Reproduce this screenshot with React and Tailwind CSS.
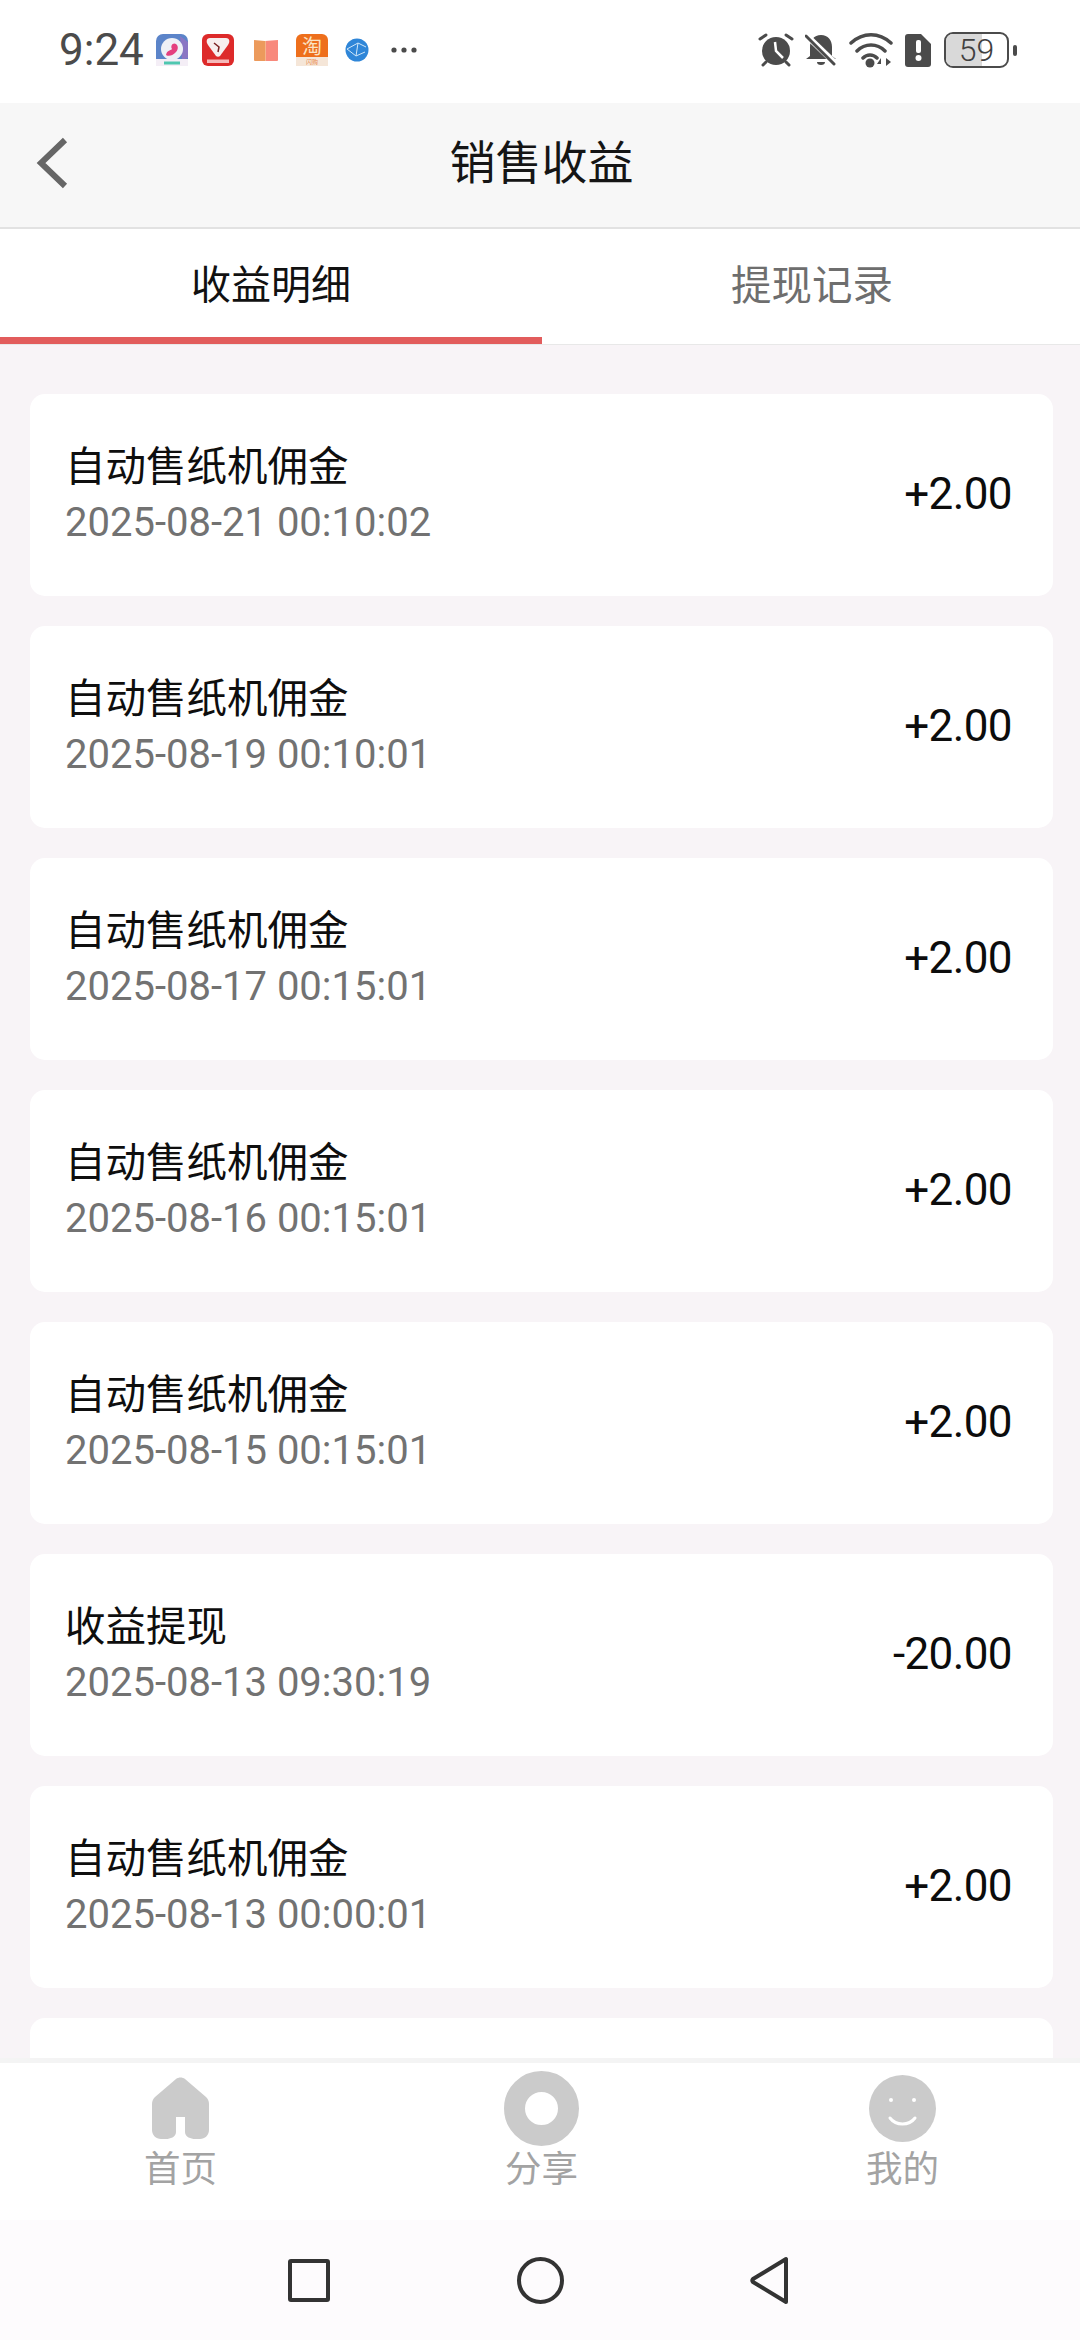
import React from "react";

const CJK = "font-['Roboto','Noto_Sans_CJK_SC',sans-serif]";

const rows = [
  ["自动售纸机佣金", "2025-08-21 00:10:02", "+2.00"],
  ["自动售纸机佣金", "2025-08-19 00:10:01", "+2.00"],
  ["自动售纸机佣金", "2025-08-17 00:15:01", "+2.00"],
  ["自动售纸机佣金", "2025-08-16 00:15:01", "+2.00"],
  ["自动售纸机佣金", "2025-08-15 00:15:01", "+2.00"],
  ["收益提现", "2025-08-13 09:30:19", "-20.00"],
  ["自动售纸机佣金", "2025-08-13 00:00:01", "+2.00"],
  ["", "", ""],
];

function AppIcons() {
  return (
    <div className="ml-[12px] flex items-center">
      <svg width="32" height="32" viewBox="0 0 32 32">
        <rect width="32" height="32" rx="7" fill="#5b84c9" />
        <path d="M24 2l8 6v16l-6 2z" fill="#8a76c4" />
        <rect x="0" y="25" width="32" height="7" fill="#f4eef6" />
        <circle cx="16" cy="15" r="11" fill="#eef0f6" />
        <path d="M10 21c1-5 4-4 6-6-2-3 1-7 4-5 3 2 2 7-1 9-2 2-6 4-9 2z" fill="#e4407f" />
        <rect x="8" y="27.500" width="16" height="3" fill="#4fc7b0" />
      </svg>
      <svg className="ml-[14px]" width="32" height="32" viewBox="0 0 32 32">
        <rect width="32" height="32" rx="6" fill="#dd2a2a" />
        <path d="M8 4h16c4 0 4 4 2 7l-8 11c-1 1-3 1-4 0L6 11C4 8 4 4 8 4z" fill="#f7eeee" />
        <path d="M12 9l5 4-1 5" stroke="#7a2222" strokeWidth="1.500" fill="none" />
        <rect x="5" y="25.500" width="22" height="3.500" fill="#f5b9b9" />
      </svg>
      <svg className="ml-[20px]" width="24" height="22" viewBox="0 0 24 22">
        <path d="M0 1l11 1v20H1a1 1 0 0 1-1-1z" fill="#ec9a5c" />
        <path d="M24 1l-13 1v20h12a1 1 0 0 0 1-1z" fill="#f8897c" />
        <path d="M11.500 2v20" stroke="#f5b48c" strokeWidth="1" />
      </svg>
      <svg className="ml-[18px] overflow-visible" width="32" height="32" viewBox="0 0 32 32">
        <rect width="32" height="32" rx="6" fill="#ee6f1c" />
        <rect y="23" width="32" height="9" fill="#f5e6d8" />
        <text x="16" y="20" textAnchor="middle" fontSize="20" fill="#fbe3c4" fontFamily="'Noto Sans CJK SC',sans-serif">淘</text>
        <text x="16" y="29.500" textAnchor="middle" fontSize="6" fill="#e98a4a" fontFamily="'Noto Sans CJK SC',sans-serif">闪购</text>
      </svg>
      <svg className="ml-[17px]" width="24" height="24" viewBox="0 0 24 24">
        <circle cx="12" cy="12" r="11.500" fill="#2f86d8" />
        <path d="M2 11l9 7 2-13 8 4M11 18l9-4M2 11l11-6" stroke="#cfe6f8" strokeWidth="1" fill="none" />
      </svg>
      <svg className="ml-[22px]" width="26" height="6" viewBox="0 0 26 6">
        <circle cx="3" cy="3" r="2.600" fill="#4b4b4b" />
        <circle cx="13" cy="3" r="2.600" fill="#4b4b4b" />
        <circle cx="23" cy="3" r="2.600" fill="#4b4b4b" />
      </svg>
    </div>
  );
}

function StatusRight() {
  return (
    <div className="flex items-center">
      <svg width="36" height="36" viewBox="0 0 36 36">
        <path d="M2 7l6-4M34 7l-6-4" stroke="#4b4b4b" strokeWidth="3" strokeLinecap="round" />
        <path d="M8 30l-3 3M28 30l3 3" stroke="#4b4b4b" strokeWidth="3" strokeLinecap="round" />
        <circle cx="18" cy="19" r="14" fill="#4b4b4b" />
        <path d="M17 10l1 9 7 7" stroke="#fff" strokeWidth="2.500" fill="none" />
      </svg>
      <svg className="ml-[11px]" width="32" height="34" viewBox="0 0 32 34">
        <path d="M16 2c7 0 11 5 11 12v9l4 3H1l4-3v-9C5 7 9 2 16 2z" fill="#4b4b4b" />
        <path d="M12 29h8a4 3 0 0 1-8 0z" fill="#4b4b4b" />
        <path d="M0 1l31 30" stroke="#fff" strokeWidth="6" />
        <path d="M1 3l28 28" stroke="#4b4b4b" strokeWidth="3" strokeLinecap="round" />
      </svg>
      <svg className="ml-[12px]" width="44" height="36" viewBox="0 0 44 36">
        <path d="M2 11c12-11 28-11 40 0M8 19c8-8 20-8 28 0M14 26c4-4 10-4 14 0" stroke="#4b4b4b" strokeWidth="3.500" fill="none" strokeLinecap="round" />
        <circle cx="21" cy="31" r="4.500" fill="#4b4b4b" />
        <path d="M32 34v-8l-4 6h4zM37 26v8l5-4z" fill="#4b4b4b" />
      </svg>
      <svg className="ml-[12px]" width="26" height="33" viewBox="0 0 26 33">
        <path d="M3 0h13l10 10v20a3 3 0 0 1-3 3H3a3 3 0 0 1-3-3V3a3 3 0 0 1 3-3z" fill="#4b4b4b" />
        <rect x="11" y="6" width="5" height="13" rx="2" fill="#fff" />
        <circle cx="13.500" cy="24" r="3" fill="#fff" />
      </svg>
      <div className="relative ml-[13px] flex h-[36px] w-[65px] items-center justify-center overflow-hidden rounded-[9px] border-[2.500px] border-[#4b4b4b] text-[32px] leading-none text-[#404040]">
        <div className="absolute inset-y-0 left-0 w-[36px] bg-[#d9d9d9]" />
        <span className="relative font-['Roboto',sans-serif] font-light">59</span>
      </div>
      <div className="ml-[4px] h-[11px] w-[4px] rounded-full bg-[#4b4b4b]" />
    </div>
  );
}

function Card({ title, date, amount }) {
  return (
    <div className="flex h-[202px] shrink-0 items-center justify-between rounded-[15px] bg-white pl-[35px] pr-[41px]">
      <div className="flex flex-col">
        <div className="h-[56px] text-[40.500px] leading-[56px] text-[#0e0e0e]">{title}</div>
        <div className="h-[56px] text-[40px] leading-[56px] text-[#727272]">{date}</div>
      </div>
      <div className="pb-[2px] text-[44px] leading-none tracking-[-0.600px] text-[#0c0c0c]">{amount}</div>
    </div>
  );
}

function NavItem({ icon, label }) {
  return (
    <div className="flex flex-1 flex-col items-center">
      <div className="flex h-[78px] items-center justify-center">{icon}</div>
      <div className="text-[36.500px] leading-[46px] text-[#a3a3a3]">{label}</div>
    </div>
  );
}

export default function App() {
  return (
    <div className={"flex h-[2340px] w-[1080px] flex-col overflow-hidden bg-[#f8f4f7] " + CJK}>
      <div className="flex h-[103px] shrink-0 items-center justify-between bg-white pb-[3px] pl-[59px] pr-[63px]">
        <div className="flex items-center">
          <span className="text-[44px] leading-none text-[#4b4b4b]">9:24</span>
          <AppIcons />
        </div>
        <StatusRight />
      </div>

      <div className="relative flex h-[126px] shrink-0 items-center justify-center border-b-2 border-[#e2e2e2] bg-[#f7f7f7] pb-[5px] pl-[3px]">
        <svg className="absolute left-[36px] top-[34px]" width="32" height="52" viewBox="0 0 32 52">
          <path d="M29 3L5 26l24 23" stroke="#666" strokeWidth="6" fill="none" />
        </svg>
        <span className="text-[46px] leading-none text-[#151515]">销售收益</span>
      </div>

      <div className="flex h-[116px] shrink-0 border-b border-[#e8e8e8] bg-white">
        <div className="flex w-[542px] items-center justify-center border-b-[7px] border-[#e25c5c] pt-[6px] text-[40px] text-[#111]">收益明细</div>
        <div className="flex flex-1 items-center justify-center pb-[7px] pl-[2px] pt-[6px] text-[40.500px] text-[#6e6e6e]">提现记录</div>
      </div>

      <div className="flex min-h-0 flex-1 flex-col gap-[30px] overflow-hidden pl-[30px] pr-[27px] pt-[49px]">
        {rows.map((r, i) => (
          <Card key={i} title={r[0]} date={r[1]} amount={r[2]} />
        ))}
      </div>

      <div className="flex h-[162px] w-[1083px] shrink-0 border-t-[5px] border-[#f4f4f4] bg-white pt-[6px]">
        <NavItem
          icon={
            <svg width="57" height="62" viewBox="0 0 57 62">
              <path d="M24 2c2.500-2 6.500-2 9 0l21 18c2 2 3 4 3 7v26c0 5-4 9-9 9h-5c-4 0-10-2-10-7V40H24v15c0 5-6 7-10 7H9c-5 0-9-4-9-9V27c0-3 1-5 3-7z" fill="#cbcbcb" />
            </svg>
          }
          label="首页"
        />
        <NavItem
          icon={
            <svg width="75" height="75" viewBox="0 0 75 75">
              <circle cx="37.500" cy="37.500" r="27" fill="none" stroke="#cbcbcb" strokeWidth="21" />
            </svg>
          }
          label="分享"
        />
        <NavItem
          icon={
            <svg width="67" height="67" viewBox="0 0 67 67">
              <circle cx="33.500" cy="33.500" r="33.500" fill="#cbcbcb" />
              <circle cx="22" cy="25" r="2" fill="#fff" />
              <circle cx="45" cy="25" r="2" fill="#fff" />
              <path d="M21 43c6 8 19 8 25 0" stroke="#fff" strokeWidth="3" fill="none" strokeLinecap="round" />
            </svg>
          }
          label="我的"
        />
      </div>

      <div className="flex h-[120px] shrink-0 items-center justify-center bg-[#fdfbfd] pr-[3px]">
        <div className="flex items-center">
          <div className="h-[43px] w-[42px] rounded-[3px] border-[4px] border-[#333]" />
          <div className="ml-[187px] h-[47px] w-[47px] rounded-full border-[4px] border-[#333]" />
          <svg className="ml-[185px]" width="40" height="49" viewBox="0 0 40 49">
            <path d="M37 3v43L4 26c-1-1-1-2 0-3z" stroke="#333" strokeWidth="4" strokeLinejoin="round" fill="none" />
          </svg>
        </div>
      </div>
    </div>
  );
}
